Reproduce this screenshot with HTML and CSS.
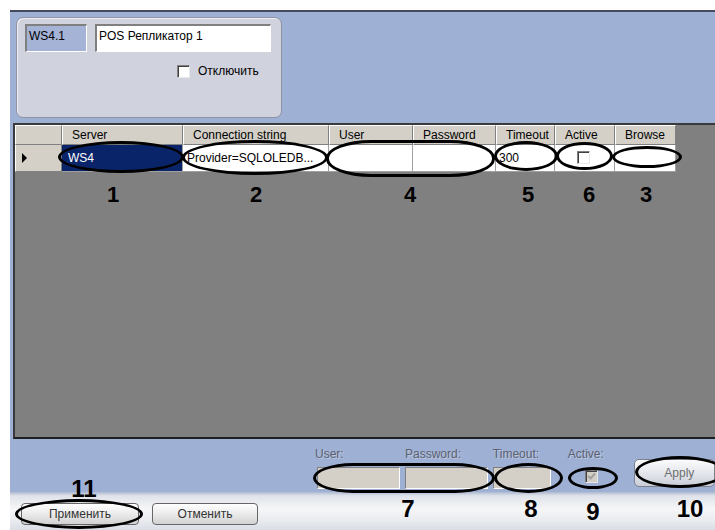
FILE: index.html
```html
<!DOCTYPE html>
<html>
<head>
<meta charset="utf-8">
<link rel="stylesheet" href="styles.css">
</head>
<body>
<div class="page">
  <div class="panel">
    <div class="top">
      <div class="group">
        <div class="idrow">
          <div class="fld fld-id">WS4.1</div>
          <div class="fld fld-name">POS Репликатор 1</div>
        </div>
        <label class="chkrow"><span class="chk"></span><span>Отключить</span></label>
      </div>
    </div>
    <div class="grid">
      <div class="row hdr">
        <div class="c c-rh"></div>
        <div class="c c-srv">Server</div>
        <div class="c c-con">Connection string</div>
        <div class="c c-usr">User</div>
        <div class="c c-pwd">Password</div>
        <div class="c c-tmo">Timeout</div>
        <div class="c c-act">Active</div>
        <div class="c c-brw">Browse</div>
      </div>
      <div class="row data">
        <div class="c c-rh"><span class="tri"></span></div>
        <div class="c c-srv sel">WS4</div>
        <div class="c c-con">Provider=SQLOLEDB...</div>
        <div class="c c-usr"></div>
        <div class="c c-pwd"></div>
        <div class="c c-tmo">300</div>
        <div class="c c-act"><span class="chk small"></span></div>
        <div class="c c-brw"></div>
      </div>
    </div>
    <div class="edit">
      <div class="col col-usr"><div class="lbl">User:</div><div class="box"></div></div>
      <div class="col col-pwd"><div class="lbl">Password:</div><div class="box"></div></div>
      <div class="col col-tmo"><div class="lbl">Timeout:</div><div class="box"></div></div>
      <div class="col col-act"><div class="lbl">Active:</div><div class="chk dis"><svg width="11" height="11" viewBox="0 0 11 11"><path d="M2 5 L4.5 7.5 L9 2.5" fill="none" stroke="#a0a0a0" stroke-width="2"/></svg></div></div>
      <div class="apply">Apply</div>
    </div>
  </div>
  <div class="footer">
    <div class="btn btn-ok">Применить</div>
    <div class="btn btn-cancel">Отменить</div>
  </div>

  <div class="notes">
    <div class="ell e1"></div>
    <div class="ell e2"></div>
    <div class="ell e4"></div>
    <div class="ell e5"></div>
    <div class="ell e6"></div>
    <div class="ell e3"></div>
    <div class="ell e7"></div>
    <div class="ell e8"></div>
    <div class="ell e9"></div>
    <div class="ell e10"></div>
    <div class="ell e11"></div>
    <div class="num n1">1</div>
    <div class="num n2">2</div>
    <div class="num n4">4</div>
    <div class="num n5">5</div>
    <div class="num n6">6</div>
    <div class="num n3">3</div>
    <div class="num big n7">7</div>
    <div class="num big n8">8</div>
    <div class="num big n9">9</div>
    <div class="num big n10">10</div>
    <div class="num big n11">11</div>
  </div>
</div>
</body>
</html>
```

FILE: styles.css
```css
* { box-sizing: border-box; }
html, body { margin: 0; padding: 0; background: #fff; }
body { font-family: "Liberation Sans", Arial, sans-serif; font-size: 12px; color: #000; }

.page {
  position: relative;
  width: 715px;
  height: 530px;
  padding: 10px 0 0 10px;
  overflow: hidden;
}

.panel {
  height: 482px;
  background: #9eb0d4;
  border-top: 2px solid #434b5c;
  display: flex;
  flex-direction: column;
}

.top { padding: 5px 0 0 6px; }

.group {
  width: 266px;
  height: 101px;
  background: #d0d3de;
  border: 1px solid #8d93a1;
  border-radius: 7px;
  box-shadow: inset 1px 1px 0 #eef0f5;
  padding: 6px 0 0 8px;
}

.idrow { display: flex; gap: 8px; }

.fld {
  height: 28px;
  padding: 4px 0 0 2px;
  border-top: 2px solid #808080;
  border-left: 2px solid #808080;
  border-bottom: 1px solid #fff;
  border-right: 1px solid #fff;
  font-size: 12px;
  line-height: 13px;
}
.fld-id { width: 62px; background: #a4b3d6; }
.fld-name { width: 176px; background: #fff; }

.chkrow {
  display: flex;
  align-items: center;
  gap: 8px;
  margin: 12px 0 0 152px;
}

.chk {
  display: inline-block;
  width: 13px;
  height: 13px;
  background: #fff;
  border-top: 1px solid #808080;
  border-left: 1px solid #808080;
  border-bottom: 1px solid #e8e8e8;
  border-right: 1px solid #e8e8e8;
  box-shadow: inset 1px 1px 0 #404040;
}

/* grid */
.grid {
  margin: 5px 0 0 3px;
  height: 316px;
  background: #808080;
  border-top: 2px solid #3a3a3a;
  border-left: 2px solid #3a3a3a;
  border-bottom: 2px solid #1e1e1e;
}

.row { display: flex; }

.c { flex: none; white-space: nowrap; overflow: hidden; }
.c-rh { width: 47px; }
.c-srv { width: 121px; }
.c-con { width: 146px; }
.c-usr { width: 84px; }
.c-pwd { width: 83px; }
.c-tmo { width: 59px; }
.c-act { width: 60px; }
.c-brw { width: 61px; }

.hdr .c {
  height: 20px;
  background: #d4d0c8;
  border-left: 1px solid #fff;
  border-top: 1px solid #fff;
  border-right: 1px solid #808080;
  border-bottom: 1px solid #808080;
  padding: 3px 0 0 9px;
  line-height: 13px;
}

.data .c {
  height: 27px;
  background: #fff;
  border-right: 1px solid #a0a0a0;
  border-bottom: 1px solid #a0a0a0;
  padding: 7px 0 0 4px;
  line-height: 13px;
}
.data .c-rh {
  background: #d4d0c8;
  border-left: 1px solid #fff;
  border-right: 1px solid #808080;
  border-bottom: 1px solid #808080;
  padding: 8px 0 0 6px;
}
.data .sel { background: #0a246a; color: #fff; padding-left: 6px; }
.data .c-tmo { padding-left: 3px; }
.data .c-act { padding: 6px 0 0 22px; }

.tri {
  display: block;
  width: 0;
  height: 0;
  border-left: 5px solid #000;
  border-top: 5px solid transparent;
  border-bottom: 5px solid transparent;
}

/* edit strip */
.edit {
  flex: 1;
  display: flex;
  align-items: flex-start;
  padding: 9px 0 0 305px;
}

.col { display: flex; flex-direction: column; }
.col-usr { width: 85px; }
.col-pwd { width: 85px; margin-left: 5px; }
.col-tmo { width: 60px; margin-left: 5px; }
.col-act { width: 40px; margin-left: 15px; align-items: center; }

.lbl {
  color: #5c6170;
  line-height: 12px;
  height: 12px;
  font-size: 12px;
  text-shadow: 1px 1px 0 rgba(255,255,255,.3);
}

.box {
  margin-top: 7px;
  height: 22px;
  background: #d4d0c8;
  border-top: 1px solid #808080;
  border-left: 1px solid #808080;
  border-bottom: 1px solid #fff;
  border-right: 1px solid #fff;
}
.col-usr .box { margin-left: 2px; width: 83px; }

.chk.dis {
  margin-top: 10px;
  background: #d4d0c8;
  display: flex;
  align-items: center;
  justify-content: center;
  margin-left: 12px;
}

.apply {
  margin: 11px 0 0 29px;
  width: 82px;
  height: 28px;
  border: 1px solid #7c818d;
  border-radius: 5px;
  background: linear-gradient(#fbfbfc, #dfe2e8 60%, #c9cdd6);
  color: #6e6e6e;
  padding: 7px 0 0 29px;
  font-size: 12px;
  line-height: 13px;
}

/* footer */
.footer {
  height: 38px;
  background: linear-gradient(#aeb9cf 0, #dfe3ea 10%, #f6f6f7 45%, #e9ebef 75%, #d9dde5 100%);
  display: flex;
  gap: 13px;
  padding: 11px 0 0 11px;
}

.btn {
  height: 22px;
  border: 1px solid #666;
  border-radius: 4px;
  background: linear-gradient(#ffffff, #ebebeb 50%, #d2d2d2);
  color: #333;
  text-align: center;
  line-height: 20px;
  font-size: 12px;
}
.btn-ok { width: 118px; }
.btn-cancel { width: 106px; }

/* annotations */
.notes { position: absolute; left: 0; top: 0; width: 715px; height: 530px; pointer-events: none; }

.ell {
  position: absolute;
  border: 3px solid #000;
  border-radius: 50%;
}
.e1 { left: 58px; top: 141px; width: 126px; height: 32px; }
.e2 { left: 182px; top: 140px; width: 146px; height: 35px; }
.e4 { left: 326px; top: 140px; width: 169px; height: 37px; border-radius: 45px / 18px; }
.e5 { left: 494px; top: 141px; width: 64px; height: 30px; }
.e6 { left: 556px; top: 142px; width: 57px; height: 28px; }
.e3 { left: 612px; top: 146px; width: 70px; height: 22px; }
.e7 { left: 313px; top: 463px; width: 182px; height: 30px; border-radius: 40px / 15px; }
.e8 { left: 494px; top: 463px; width: 69px; height: 30px; }
.e9 { left: 568px; top: 467px; width: 50px; height: 22px; }
.e10 { left: 635px; top: 456px; width: 90px; height: 32px; }
.e11 { left: 15px; top: 499px; width: 128px; height: 30px; }

.num {
  position: absolute;
  width: 30px;
  text-align: center;
  font-family: "Liberation Sans", Arial, sans-serif;
  font-weight: bold;
  font-size: 22px;
  line-height: 22px;
  color: #000;
  top: 184px;
}
.num.big { font-size: 24px; line-height: 24px; }
.n1 { left: 98px; }
.n2 { left: 241px; }
.n4 { left: 395px; }
.n5 { left: 513px; }
.n6 { left: 574px; }
.n3 { left: 631px; }
.n7 { left: 393px; top: 497px; }
.n8 { left: 516px; top: 497px; }
.n9 { left: 578px; top: 500px; }
.n10 { left: 675px; top: 497px; }
.n11 { left: 69px; top: 477px; }
```
